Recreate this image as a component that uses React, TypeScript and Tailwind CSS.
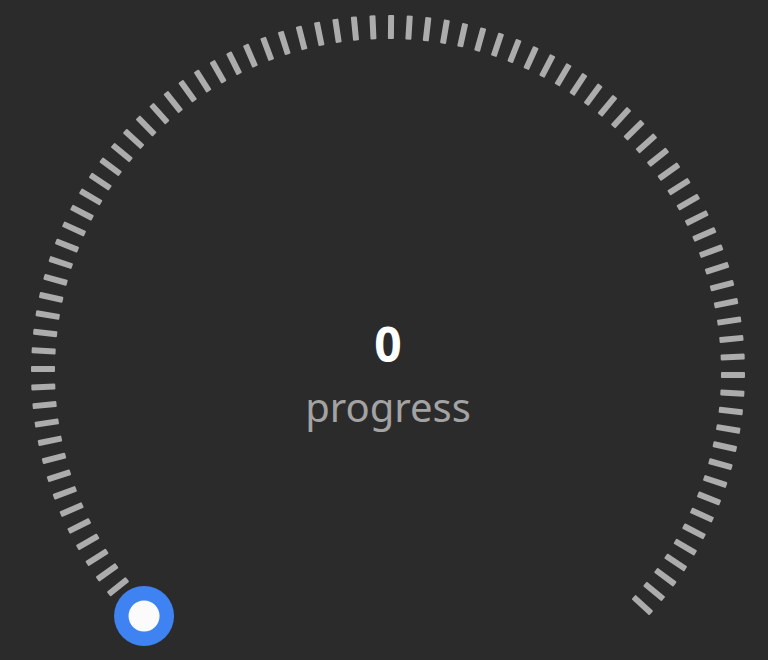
import React from "react";

const CX = 388;
const CY = 372;
const TICKS = 90;
const START = -134.5;
const STEP = 3;

function Dial() {
  const ticks = Array.from({ length: TICKS }, (_, i) => START + i * STEP);
  const knobAngle = (-135 * Math.PI) / 180;
  const kx = CX + 345 * Math.sin(knobAngle);
  const ky = CY - 345 * Math.cos(knobAngle);
  return (
    <svg
      className="absolute inset-0"
      width={768}
      height={660}
      viewBox="0 0 768 660"
    >
      {ticks.map((a, i) => (
        <rect
          key={i}
          x={CX - 3}
          y={CY - 357}
          width={6}
          height={24}
          rx={1}
          fill="#acacac"
          transform={`rotate(${a} ${CX} ${CY})`}
        />
      ))}
      <circle cx={kx} cy={ky} r={30} fill="#3f83f2" />
      <circle cx={kx} cy={ky} r={15.5} fill="#fbfbfb" />
    </svg>
  );
}

export default function App() {
  return (
    <div className="relative w-[768px] h-[660px] overflow-hidden bg-[#2b2b2b] font-['Noto_Sans',sans-serif]">
      <Dial />
      <div className="relative flex flex-col items-center pt-[320px] pl-[8px]">
        <span className="text-[48px] leading-none font-bold text-white">0</span>
        <span className="mt-[19px] text-[40px] leading-none text-[#a3a3a3]">
          progress
        </span>
      </div>
    </div>
  );
}
